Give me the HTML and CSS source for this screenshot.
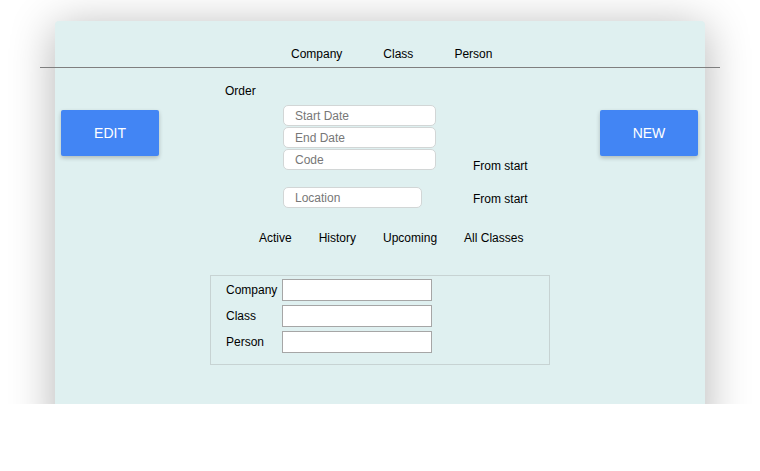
FILE: index.html
```html
<!DOCTYPE html>
<html>
<head>
<meta charset="utf-8">
<link rel="stylesheet" href="styles.css">
</head>
<body>
<div class="stage">
  <div class="card">
    <nav class="tabs">
      <span>Company</span>
      <span>Class</span>
      <span>Person</span>
    </nav>
    <div class="rule"></div>
    <div class="main">
      <div class="side side-left">
        <button class="btn">EDIT</button>
      </div>
      <div class="center">
        <div class="order">Order</div>
        <div class="row row-dates">
          <div class="stack">
            <input class="pill" type="text" placeholder="Start Date">
            <input class="pill" type="text" placeholder="End Date">
            <input class="pill" type="text" placeholder="Code">
          </div>
          <div class="from from-1">From start</div>
        </div>
        <div class="row row-loc">
          <input class="pill pill-loc" type="text" placeholder="Location">
          <div class="from from-2">From start</div>
        </div>
        <div class="filters">
          <span>Active</span>
          <span>History</span>
          <span>Upcoming</span>
          <span>All Classes</span>
        </div>
        <div class="box">
          <div class="field"><label>Company</label><input class="plain" type="text"></div>
          <div class="field"><label>Class</label><input class="plain" type="text"></div>
          <div class="field"><label>Person</label><input class="plain" type="text"></div>
        </div>
      </div>
      <div class="side side-right">
        <button class="btn">NEW</button>
      </div>
    </div>
  </div>
</div>
</body>
</html>
```
FILE: styles.css
```css
* { box-sizing: border-box; }
html, body { margin: 0; padding: 0; background: #fff; }
body {
  font-family: "Liberation Sans", Arial, sans-serif;
  font-size: 12px;
  line-height: 14px;
  color: #000;
}
.stage {
  height: 404px;
  overflow: hidden;
  padding-top: 21px;
}
.card {
  margin-left: 55px;
  width: 650px;
  min-height: 420px;
  background: #dff0f0;
  border-radius: 4px 4px 0 0;
  box-shadow: 0 6px 45px rgba(0, 0, 0, 0.3);
}
.tabs {
  display: flex;
  gap: 41px;
  padding: 26px 0 6px 236px;
}
.rule {
  height: 1px;
  background: #7f7f7f;
  margin: 0 -15px;
}
.main {
  display: grid;
  grid-template-columns: 110px 1fr 110px;
}
.side { padding-top: 42px; }
.side-left { padding-left: 6px; }
.side-right { padding-left: 5px; }
.btn {
  width: 98px;
  height: 46px;
  border: none;
  border-radius: 2px;
  background: #4285f4;
  color: #fff;
  font-family: "Liberation Sans", Arial, sans-serif;
  font-size: 14px;
  box-shadow: 0 2px 4px rgba(0, 0, 0, 0.22);
  padding: 0;
}
.center { padding-top: 16px; }
.order { padding-left: 60px; }
.row {
  display: flex;
  align-items: flex-start;
}
.row-dates { margin-top: 7px; padding-left: 118px; height: 65px; }
.stack {
  display: flex;
  flex-direction: column;
  gap: 1px;
  width: 153px;
}
.pill {
  display: block;
  width: 153px;
  height: 21px;
  margin: 0;
  border: 1px solid #d2d6d6;
  border-radius: 5px;
  background: #fff;
  padding: 0 0 0 11px;
  font-family: "Liberation Sans", Arial, sans-serif;
  font-size: 12px;
  outline: none;
}
.pill::placeholder { color: #777; }
.from { white-space: nowrap; }
.from-1 { margin: 54px 0 0 37px; }
.row-loc { margin-top: 17px; padding-left: 118px; }
.pill-loc { width: 139px; }
.from-2 { margin: 5px 0 0 51px; }
.filters {
  display: flex;
  gap: 27px;
  margin-top: 23px;
  padding-left: 94px;
}
.box {
  margin: 30px 0 0 45px;
  width: 340px;
  border: 1px solid #c7d3d3;
  padding: 3px 0 11px 15px;
  display: flex;
  flex-direction: column;
  gap: 4px;
}
.field {
  display: flex;
  align-items: center;
}
.field label { width: 56px; }
.plain {
  width: 150px;
  height: 22px;
  margin: 0;
  border: 1px solid #a6a6a6;
  border-radius: 0;
  background: #fff;
  padding: 0 2px;
  font-family: "Liberation Sans", Arial, sans-serif;
  font-size: 12px;
  outline: none;
}
```
